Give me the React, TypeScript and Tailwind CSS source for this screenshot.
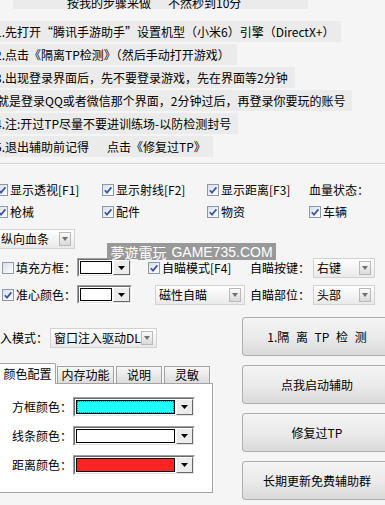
import React from "react";

function Check({ on = true }: { on?: boolean }) {
  return (
    <span className="flex h-[12px] w-[12px] shrink-0 items-center justify-center border border-[#8a99b2] bg-linear-to-br from-[#d9dfe8] to-white">
      {on && (
        <svg width="10" height="10" viewBox="0 0 10 10">
          <path d="M1.8 5.2 L4 7.6 L8.4 2.4" fill="none" stroke="#3a55a6" strokeWidth="1.7" />
        </svg>
      )}
    </span>
  );
}

function Combo({ text, className = "" }: { text: string; className?: string }) {
  return (
    <div className={`flex h-[20px] shrink-0 items-center border border-[#d2d2d2] bg-linear-to-b from-white to-[#e9e9e9] pl-[3px] pr-[3px] ${className}`}>
      <span className="flex-1 truncate">{text}</span>
      <span className="flex h-[14px] w-[12px] items-center justify-center border border-[#b9b9b9] bg-linear-to-b from-[#fbfbfb] to-[#d9d9d9]">
        <svg width="6" height="4" viewBox="0 0 6 4">
          <path d="M0 0h6L3 4z" fill="#707070" />
        </svg>
      </span>
    </div>
  );
}

function ColorBox({ fill, className = "", focus = false }: { fill: string; className?: string; focus?: boolean }) {
  return (
    <div className={`flex shrink-0 border border-t-[#a0a0a0] border-l-[#a0a0a0] border-r-white border-b-white ${className}`}>
      <div className="flex flex-1 border border-t-[#6a6a6a] border-l-[#6a6a6a] border-r-[#e3e3e3] border-b-[#e3e3e3] bg-white">
        <div className="flex-1 p-[1px]">
          <div className={`h-full border border-black ${fill} ${focus ? "outline-1 outline-dotted outline-[#b04040] -outline-offset-2" : ""}`} />
        </div>
        <div className="flex w-[17px] items-center justify-center border border-t-white border-l-white border-r-[#6a6a6a] border-b-[#6a6a6a] bg-[#ececec]">
          <svg width="7" height="4" viewBox="0 0 7 4">
            <path d="M0 0h7L3.5 4z" fill="#000" />
          </svg>
        </div>
      </div>
    </div>
  );
}

function Line({ children, className = "" }: { children: React.ReactNode; className?: string }) {
  return (
    <div className={`flex h-[21px] items-center whitespace-pre bg-[#ebebeb] pr-[7px] ${className}`}>{children}</div>
  );
}

function Btn({ children, className = "" }: { children: React.ReactNode; className?: string }) {
  return (
    <div className={`flex h-[39px] w-[150px] shrink-0 items-center justify-center rounded-[3px] border border-[#adadad] bg-linear-to-b from-[#f4f4f4] via-[#ebebeb] to-[#d9d9d9] ${className}`}>
      {children}
    </div>
  );
}

export default function App() {
  return (
    <div className="relative h-[505px] w-[385px] overflow-hidden bg-[#f5f5f5] font-['Noto_Sans_CJK_SC',sans-serif] text-[12px] leading-[14px] text-black">
      {/* instructions */}
      <div className="-mt-[11px] flex flex-col items-start gap-[2px]">
        <div className="ml-[13px] flex h-[20px] w-[295px] items-center whitespace-pre bg-[#ebebeb] pl-[54px] pt-[8px]">
          <span>按我的步骤来做</span>
          <span className="ml-[17px]">不然秒到10分</span>
        </div>
        <Line className="-ml-[5px] mt-[10px]">1.先打开“腾讯手游助手”设置机型（小米6）引擎（DirectX+）</Line>
        <Line className="-ml-[5px]">2.点击《隔离TP检测》（然后手动打开游戏）</Line>
        <Line className="-ml-[5px]">3.出现登录界面后，先不要登录游戏，先在界面等2分钟</Line>
        <Line className="-ml-[3px]">就是登录QQ或者微信那个界面，2分钟过后，再登录你要玩的账号</Line>
        <Line className="-ml-[5px]">4.注:开过TP尽量不要进训练场-以防检测封号</Line>
        <Line className="-ml-[5px]">
          <span>5.退出辅助前记得</span>
          <span className="ml-[18px]">点击《修复过TP》</span>
        </Line>
      </div>
      <div className="mt-[6px] h-px bg-[#d5d5d5]" />
      <div className="h-px bg-white" />

      {/* visual options */}
      <div className="-ml-[4px] mt-[16px] grid grid-cols-[106px_105px_102px_80px] gap-y-[4px]">
        <label className="flex h-[18px] items-center gap-[2px]"><Check />显示透视[F1]</label>
        <label className="flex h-[18px] items-center gap-[2px]"><Check />显示射线[F2]</label>
        <label className="flex h-[18px] items-center gap-[2px]"><Check />显示距离[F3]</label>
        <span className="flex h-[18px] items-center">血量状态：</span>
        <label className="flex h-[18px] items-center gap-[2px]"><Check />枪械</label>
        <label className="flex h-[18px] items-center gap-[2px]"><Check />配件</label>
        <label className="flex h-[18px] items-center gap-[2px]"><Check />物资</label>
        <label className="flex h-[18px] items-center gap-[2px]"><Check />车辆</label>
      </div>
      <Combo text="纵向血条" className="-ml-[3px] mt-[8px] w-[78px]" />

      {/* aim rows */}
      <div className="mt-[9px] flex h-[19px] items-center">
        <label className="flex w-[77px] shrink-0 items-center gap-[2px] pl-[2px]"><Check on={false} />填充方框：</label>
        <ColorBox fill="bg-white" className="h-[19px] w-[55px]" />
        <label className="flex w-[118px] shrink-0 items-center gap-[2px] pl-[16px]"><Check />自瞄模式[F4]</label>
        <span className="w-[63px] shrink-0">自瞄按键：</span>
        <Combo text="右键" className="w-[62px]" />
      </div>
      <div className="mt-[8px] flex h-[19px] items-center">
        <label className="flex w-[77px] shrink-0 items-center gap-[2px] pl-[2px]"><Check />准心颜色：</label>
        <ColorBox fill="bg-white" className="h-[19px] w-[55px]" />
        <div className="w-[118px] shrink-0 pl-[23px]">
          <Combo text="磁性自瞄" className="w-[90px]" />
        </div>
        <span className="w-[63px] shrink-0">自瞄部位：</span>
        <Combo text="头部" className="w-[62px]" />
      </div>

      {/* lower area */}
      <div className="mt-[13px] flex">
        <div className="w-[242px] shrink-0 pt-[11px]">
          <div className="flex h-[19px] items-center">
            <span className="-ml-[12px] w-[62px] shrink-0">注入模式：</span>
            <Combo text="窗口注入驱动DL" className="w-[107px]" />
          </div>

          <div className="mt-[16px] flex h-[20px] items-end">
            <div className="relative z-10 -mb-px -ml-[3px] flex h-[21px] w-[59px] items-center justify-center rounded-t-[2px] border border-b-0 border-[#a3a3a3] bg-white pl-[2px]">颜色配置</div>
            <div className="ml-[1px] flex h-[17px] w-[57px] items-center justify-center border border-b-0 border-[#a3a3a3] bg-linear-to-b from-[#f7f7f7] to-[#dcdcdc]">内存功能</div>
            <div className="ml-[2px] flex h-[17px] w-[46px] items-center justify-center border border-b-0 border-[#a3a3a3] bg-linear-to-b from-[#f7f7f7] to-[#dcdcdc]">说明</div>
            <div className="ml-[2px] flex h-[17px] w-[46px] items-center justify-center border border-b-0 border-[#a3a3a3] bg-linear-to-b from-[#f7f7f7] to-[#dcdcdc]">灵敏</div>
          </div>
          <div className="-ml-[1px] flex h-[110px] w-[214px] flex-col gap-[9px] border border-[#a3a3a3] bg-white pl-[12px] pt-[13px]">
            <div className="flex h-[20px] items-center">
              <span className="w-[61px] shrink-0">方框颜色：</span>
              <ColorBox fill="bg-[#22ffff]" focus className="h-[20px] w-[122px]" />
            </div>
            <div className="flex h-[20px] items-center">
              <span className="w-[61px] shrink-0">线条颜色：</span>
              <ColorBox fill="bg-white" className="h-[20px] w-[122px]" />
            </div>
            <div className="flex h-[20px] items-center">
              <span className="w-[61px] shrink-0">距离颜色：</span>
              <ColorBox fill="bg-[#ff2424]" className="h-[20px] w-[122px]" />
            </div>
          </div>
        </div>

        <div className="flex shrink-0 flex-col gap-[9px]">
          <Btn className="[word-spacing:4px]">1.隔 离 TP 检 测</Btn>
          <Btn>点我启动辅助</Btn>
          <Btn>修复过TP</Btn>
          <Btn>长期更新免费辅助群</Btn>
        </div>
      </div>

      {/* watermark */}
      <div className="absolute left-[107px] top-[243px] flex h-[17px] w-[169px] items-center justify-center gap-[5px] overflow-hidden bg-[#8f8f8f]/90 text-[14px] leading-none text-white">
        <span>夢遊電玩</span>
        <span className="font-['Liberation_Sans',sans-serif]">GAME735.COM</span>
      </div>
    </div>
  );
}
